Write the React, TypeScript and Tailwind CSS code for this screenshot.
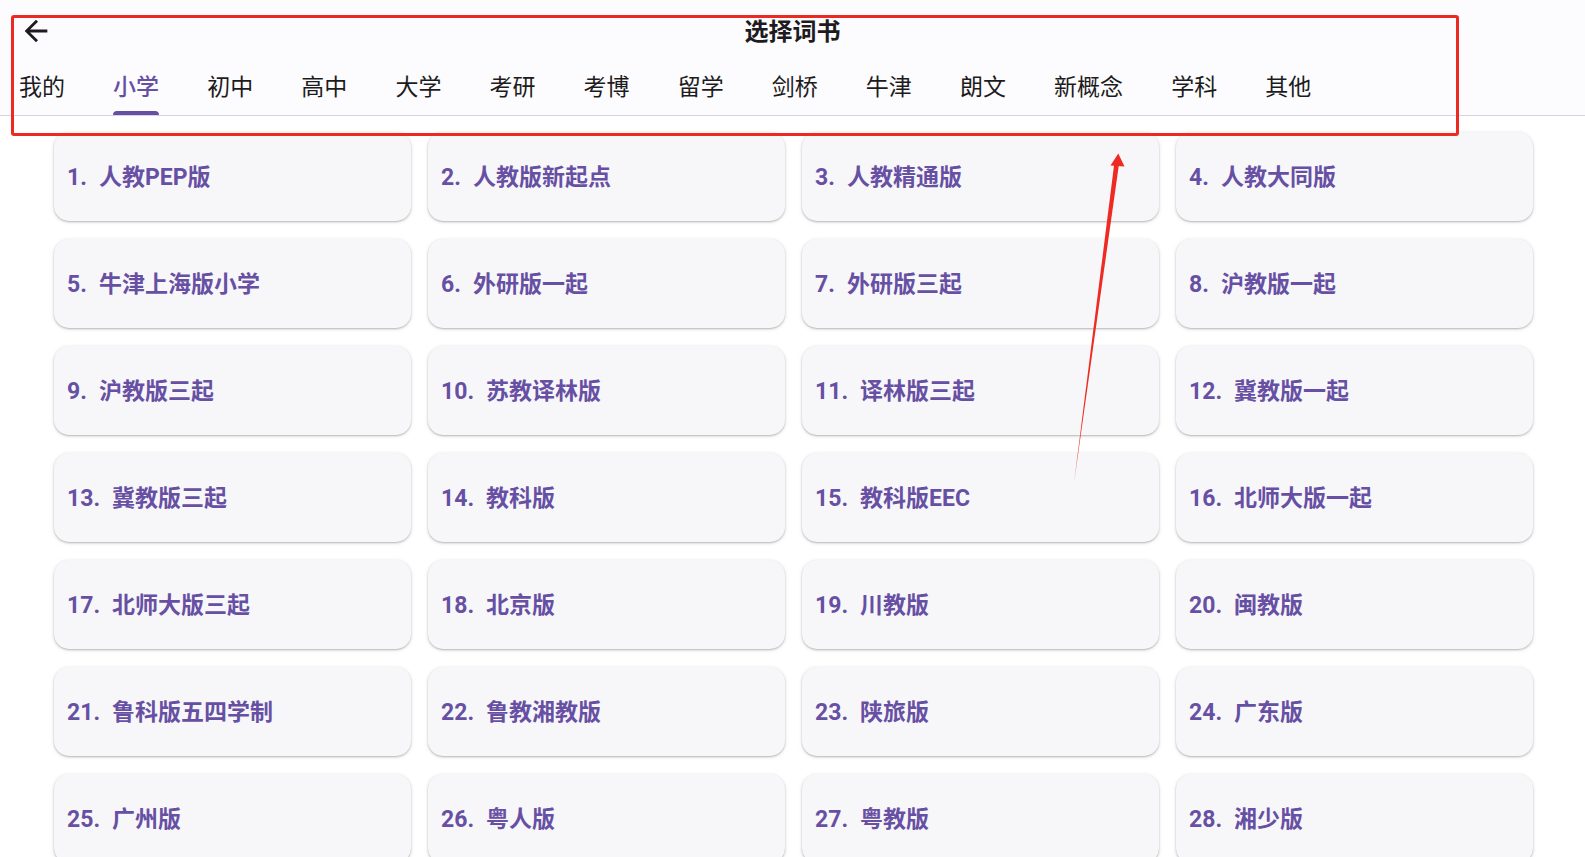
import React from "react";

const tabs = ["我的", "小学", "初中", "高中", "大学", "考研", "考博", "留学", "剑桥", "牛津", "朗文", "新概念", "学科", "其他"];

const books = [
  "人教PEP版", "人教版新起点", "人教精通版", "人教大同版",
  "牛津上海版小学", "外研版一起", "外研版三起", "沪教版一起",
  "沪教版三起", "苏教译林版", "译林版三起", "冀教版一起",
  "冀教版三起", "教科版", "教科版EEC", "北师大版一起",
  "北师大版三起", "北京版", "川教版", "闽教版",
  "鲁科版五四学制", "鲁教湘教版", "陕旅版", "广东版",
  "广州版", "粤人版", "粤教版", "湘少版",
];

export default function App() {
  return (
    <div className="relative w-[1585px] h-[857px] overflow-hidden bg-white font-[Roboto,'Noto_Sans_CJK_SC',sans-serif]">
      {/* Header */}
      <div className="flex flex-col h-[116px] bg-[#fcfbfd] border-b border-[#d6d3da]">
        <div className="relative flex items-center h-[62px]">
          <svg className="ml-[19px] w-[34px] h-[34px] text-[#1d1b20]" viewBox="0 0 24 24" fill="currentColor">
            <path d="M20 11H7.83l5.59-5.59L12 4l-8 8 8 8 1.41-1.41L7.83 13H20v-2z" />
          </svg>
          <div className="absolute inset-0 flex items-center justify-center pt-[2px] pointer-events-none">
            <span className="text-[24px] font-bold text-[#1d1b20] leading-none">选择词书</span>
          </div>
        </div>
        <div className="flex flex-1 items-stretch pl-[19px] gap-[48.1px]">
          {tabs.map((t, i) => (
            <div key={t} className="relative flex items-center pb-[2px]">
              <span className={`text-[23px] leading-none ${i === 1 ? "text-[#6750a4] font-medium" : "text-[#1d1b20]"}`}>{t}</span>
              {i === 1 && <div className="absolute left-0 right-0 bottom-0 h-[4px] rounded-t-[4px] bg-[#6750a4]" />}
            </div>
          ))}
        </div>
      </div>

      {/* Grid */}
      <div className="grid grid-cols-4 gap-x-[17px] gap-y-[18px] pl-[54px] pr-[52px] pt-[16px]">
        {books.map((b, i) => (
          <div
            key={b}
            className="flex items-center h-[89px] pl-[13px] pt-[2px] rounded-[15px] bg-[#f7f7f9] shadow-[0_1px_2px_rgba(0,0,0,0.25),0_1px_4px_1px_rgba(0,0,0,0.06)]"
          >
            <span className="text-[23px] font-bold text-[#6750a4] leading-none">
              <span className="mr-[12px]">{i + 1}.</span>
              {b}
            </span>
          </div>
        ))}
      </div>

      {/* Annotation: red rectangle */}
      <div className="absolute left-[11px] top-[15px] w-[1448px] h-[121px] border-[3px] border-[#ec2a22] rounded-[3px] pointer-events-none" />

      {/* Annotation: red arrow */}
      <svg className="absolute left-0 top-0 pointer-events-none" width="1585" height="857" viewBox="0 0 1585 857">
        <polygon points="1114.2,164 1119,164 1074,483" fill="#ee2a22" />
        <polygon points="1118.3,153.5 1110.5,165.5 1124.5,166.5" fill="#ee2a22" />
      </svg>
    </div>
  );
}
